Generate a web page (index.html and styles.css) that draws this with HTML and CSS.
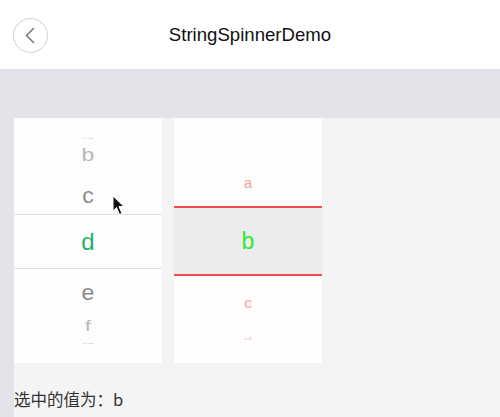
FILE: index.html
```html
<!DOCTYPE html>
<html lang="zh">
<head>
<meta charset="utf-8">
<title>StringSpinnerDemo</title>
<link rel="stylesheet" href="styles.css">
</head>
<body>
<header class="nav">
  <button class="back" aria-label="back">
    <svg width="12" height="17" viewBox="0 0 12 17"><path d="M9.5 1.5 L2.5 8.5 L9.5 15.5" fill="none" stroke="#7a7a7a" stroke-width="1.6" stroke-linecap="round" stroke-linejoin="round"/></svg>
  </button>
  <h1 class="title">StringSpinnerDemo</h1>
</header>
<div class="band"></div>
<main class="content">
  <div class="spinners">
    <div class="wheel wheel-left">
      <div class="item l0"><span>a</span></div>
      <div class="item l1"><span>b</span></div>
      <div class="item l2"><span>c</span></div>
      <div class="item lsel"><span>d</span></div>
      <div class="item l4"><span>e</span></div>
      <div class="item l5"><span>f</span></div>
      <div class="item l6"><span>g</span></div>
    </div>
    <div class="wheel wheel-right">
      <div class="item r0"><span>a</span></div>
      <div class="item rsel"><span>b</span></div>
      <div class="item r2"><span>c</span></div>
      <div class="item r3"><span>d</span></div>
    </div>
  </div>
  <p class="result">选中的值为：b</p>
  <svg class="cursor" width="14" height="21" viewBox="0 0 14 21"><path d="M1 1 L1 16 L4.5 12.5 L7.5 19.5 L10 18.5 L7 11.5 L12 11.5 Z" fill="#111" stroke="#fff" stroke-width="1"/></svg>
</main>
</body>
</html>
```
FILE: styles.css
```css
html, body {
  margin: 0;
  padding: 0;
}
body {
  width: 500px;
  height: 417px;
  overflow: hidden;
  background: #e4e3ea;
  font-family: "Liberation Sans", Arial, "Noto Sans CJK SC", sans-serif;
}
.nav {
  height: 69px;
  background: #ffffff;
  display: flex;
  align-items: center;
  justify-content: center;
  position: relative;
}
.back {
  position: absolute;
  left: 13px;
  top: 18px;
  width: 35px;
  height: 35px;
  border-radius: 50%;
  border: 1px solid #d0d0d0;
  background: #fff;
  padding: 0 2px 0 0;
  display: flex;
  align-items: center;
  justify-content: center;
}
.title {
  margin: 0;
  font-size: 18.6px;
  font-weight: normal;
  color: #111111;
  padding-top: 1px;
}
.band {
  height: 49px;
}
.content {
  margin-left: 14px;
  height: 299px;
  background: #f4f4f5;
  position: relative;
}
.spinners {
  display: flex;
  gap: 12px;
}
.wheel {
  width: 148px;
  height: 245px;
  background: #fdfdfd;
  display: flex;
  flex-direction: column;
  overflow: hidden;
}
.item {
  display: flex;
  align-items: center;
  justify-content: center;
  flex: none;
}
.item span {
  display: inline-block;
}
.wheel-left .item {
  font-size: 23px;
  color: #8c8c8c;
}
.l0 { margin-top: 14px; height: 12px; }
.l0 span { transform: scaleY(0.07); color: #d4d4d4; }
.l1 { height: 22px; }
.l1 span { transform: scaleY(0.78); color: #b8b8b8; }
.l2 { margin-top: 10px; height: 38px; }
.l2 span { transform: scaleY(0.95); }
.lsel {
  height: 53px;
  border-top: 1px solid #e2e2e2;
  border-bottom: 1px solid #e2e2e2;
  color: #1fb26c !important;
  font-size: 24px !important;
}
.l4 { height: 47px; }
.l4 span { transform: scaleY(0.95); }
.l5 { height: 20px; }
.l5 span { transform: scaleY(0.6); color: #b8b8b8; }
.l6 { height: 14px; }
.l6 span { transform: scaleY(0.07); color: #d4d4d4; }

.wheel-right .item {
  font-size: 15px;
  color: #f2a3a3;
}
.r0 { margin-top: 40px; height: 48px; }
.rsel {
  height: 66px;
  background: #ececec;
  border-top: 2px solid #ef4b4b;
  border-bottom: 2px solid #ef4b4b;
  font-size: 23px !important;
  color: #30e830 !important;
}
.r2 { height: 52px; }
.r3 { height: 20px; }
.r3 span { transform: scaleY(0.2); color: #f7caca; }

.result {
  margin: 0;
  padding-top: 26px;
  font-family: "Noto Sans CJK SC", sans-serif;
  font-size: 16.5px;
  line-height: 20px;
  color: #333333;
}
.cursor {
  position: absolute;
  left: 98px;
  top: 77px;
}
```
